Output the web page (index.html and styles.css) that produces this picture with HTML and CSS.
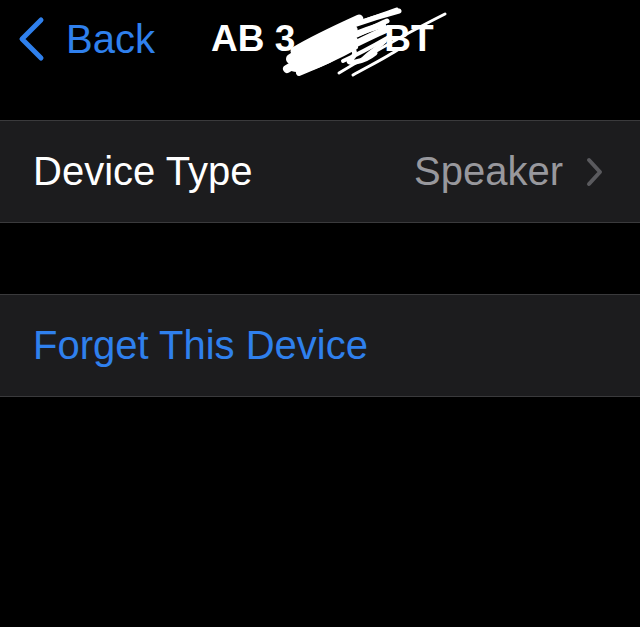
FILE: index.html
```html
<!DOCTYPE html>
<html>
<head>
<meta charset="utf-8">
<link rel="stylesheet" href="styles.css">
</head>
<body>
<div class="screen">
  <header class="navbar">
    <a class="back">
      <svg class="back-chevron" width="30" height="46" viewBox="0 0 30 46">
        <path d="M25 4 L6 23 L25 42" fill="none" stroke="#2f80ed" stroke-width="5" stroke-linecap="round" stroke-linejoin="round"/>
      </svg>
      <span class="back-label">Back</span>
    </a>
    <h1 class="title">
      <span>AB 3</span><span class="hidden-part">000</span><span>BT</span>
      <svg class="scribble" width="170" height="72" viewBox="0 0 170 72">
        <g fill="#fff" stroke="#fff" stroke-linecap="round" stroke-linejoin="round">
          <path d="M14 50 C24 38 40 30 58 22 C70 16 80 18 76 28 C72 38 64 46 50 54 C38 60 22 66 12 62 Z" stroke-width="4"/>
        </g>
        <g fill="none" stroke="#fff" stroke-linecap="round" stroke-linejoin="round">
          <path d="M12 52 C30 40 50 30 70 20" stroke-width="10"/>
          <path d="M8 62 C28 50 50 40 72 28" stroke-width="8"/>
          <path d="M16 44 C36 32 58 22 80 12" stroke-width="9"/>
          <path d="M22 58 C42 50 56 44 74 34" stroke-width="10"/>
          <path d="M30 36 C60 22 90 12 120 4" stroke-width="5"/>
          <path d="M40 30 C70 18 96 10 118 2" stroke-width="3"/>
          <path d="M50 40 C70 32 90 22 108 14" stroke-width="5"/>
          <path d="M70 30 C84 24 96 20 104 18" stroke-width="6"/>
          <path d="M58 46 C78 36 94 28 108 22" stroke-width="7"/>
          <path d="M64 54 C82 46 96 38 110 30" stroke-width="4"/>
          <path d="M60 66 C90 48 128 26 166 7" stroke-width="3"/>
          <path d="M74 68 C92 58 108 50 120 42" stroke-width="3"/>
          <path d="M20 66 C40 58 58 50 76 40" stroke-width="6"/>
          <path d="M62 42 C74 38 80 46 72 52 C64 58 84 56 96 46" stroke-width="5"/>
          <path d="M84 52 C92 44 100 40 106 34" stroke-width="4"/>
        </g>
      </svg>
    </h1>
  </header>

  <div class="spacer-top"></div>

  <section class="group">
    <div class="cell">
      <span class="cell-label">Device Type</span>
      <span class="cell-value">Speaker</span>
      <svg class="cell-chevron" width="18" height="30" viewBox="0 0 18 30">
        <path d="M3 3 L14 15 L3 27" fill="none" stroke="#5a5a5e" stroke-width="4" stroke-linecap="round" stroke-linejoin="round"/>
      </svg>
    </div>
  </section>

  <div class="spacer-mid"></div>

  <section class="group">
    <div class="cell">
      <span class="cell-action">Forget This Device</span>
    </div>
  </section>
</div>
</body>
</html>
```

FILE: styles.css
```css
html, body {
  margin: 0;
  padding: 0;
  background: #000;
}
.screen {
  width: 640px;
  height: 627px;
  background: #000;
  font-family: "Liberation Sans", Arial, sans-serif;
  overflow: hidden;
}
.navbar {
  height: 80px;
  display: flex;
  align-items: center;
  position: relative;
}
.back {
  display: flex;
  align-items: center;
  padding-left: 16px;
  color: #2f80ed;
}
.back-chevron {
  display: block;
  margin-top: -2px;
}
.back-label {
  font-size: 40px;
  margin-left: 20px;
  margin-top: -2px;
  color: #2f80ed;
}
.title {
  margin: -2px 0 0 56px;
  font-size: 37px;
  font-weight: bold;
  color: #fff;
  position: relative;
  white-space: nowrap;
}
.hidden-part {
  display: inline-block;
  width: 89px;
  overflow: hidden;
  vertical-align: bottom;
  color: transparent;
}
.scribble {
  position: absolute;
  left: 68px;
  top: -11px;
}
.spacer-top {
  height: 40px;
}
.spacer-mid {
  height: 71px;
}
.group {
  background: #1c1c1e;
  border-top: 1px solid #3a3a3c;
  border-bottom: 1px solid #3a3a3c;
}
.cell {
  height: 101px;
  display: flex;
  align-items: center;
  padding: 0 36px 0 33px;
}
.cell-label {
  font-size: 40px;
  color: #fff;
  flex: 1;
}
.cell-value {
  font-size: 40px;
  color: #98989d;
  margin-right: 23px;
}
.cell-chevron {
  display: block;
}
.cell-action {
  font-size: 40px;
  color: #2f80ed;
}
```
